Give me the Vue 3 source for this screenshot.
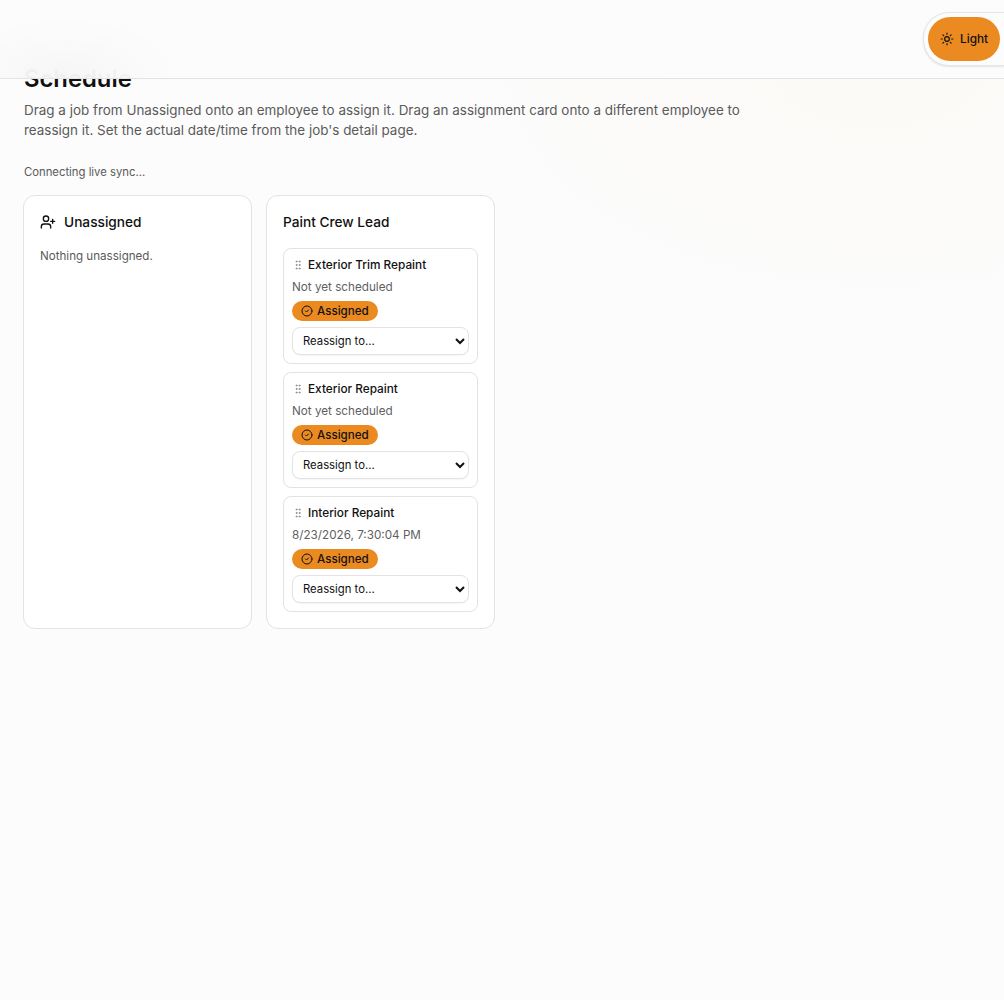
<script setup>
const jobs = [
  { title: 'Exterior Trim Repaint', when: 'Not yet scheduled' },
  { title: 'Exterior Repaint', when: 'Not yet scheduled' },
  { title: 'Interior Repaint', when: '8/23/2026, 7:30:04 PM' },
]
</script>

<template>
  <div class="page">
    <div class="glow-right"></div>
    <header class="topbar">
      <div class="blob"></div>
      <div class="toggle-wrap">
        <button class="toggle">
          <svg class="sun" viewBox="0 0 24 24" fill="none" stroke="currentColor" stroke-width="2" stroke-linecap="round" stroke-linejoin="round">
            <circle cx="12" cy="12" r="4" />
            <path d="M12 2v2M12 20v2M4.93 4.93l1.41 1.41M17.66 17.66l1.41 1.41M2 12h2M20 12h2M6.34 17.66l-1.41 1.41M19.07 4.93l-1.41 1.41" />
          </svg>
          <span>Light</span>
        </button>
      </div>
    </header>

    <main class="main">
      <h1 class="title">Schedule</h1>
      <p class="intro">Drag a job from Unassigned onto an employee to assign it. Drag an assignment card onto a different employee to reassign it. Set the actual date/time from the job's detail page.</p>
      <p class="sync">Connecting live sync…</p>

      <div class="board">
        <section class="column">
          <h2 class="col-title">
            <svg class="user-plus" viewBox="0 0 24 24" fill="none" stroke="currentColor" stroke-width="2" stroke-linecap="round" stroke-linejoin="round">
              <path d="M16 21v-2a4 4 0 0 0-4-4H6a4 4 0 0 0-4 4v2" />
              <circle cx="9" cy="7" r="4" />
              <path d="M19 8v6M22 11h-6" />
            </svg>
            Unassigned
          </h2>
          <p class="empty">Nothing unassigned.</p>
        </section>

        <section class="column">
          <h2 class="col-title">Paint Crew Lead</h2>
          <div class="cards">
            <article v-for="job in jobs" :key="job.title" class="card">
              <div class="card-head">
                <svg class="grip" viewBox="0 0 24 24" fill="none" stroke="currentColor" stroke-width="2" stroke-linecap="round" stroke-linejoin="round">
                  <circle cx="9" cy="5" r="1" /><circle cx="9" cy="12" r="1" /><circle cx="9" cy="19" r="1" />
                  <circle cx="15" cy="5" r="1" /><circle cx="15" cy="12" r="1" /><circle cx="15" cy="19" r="1" />
                </svg>
                <span>{{ job.title }}</span>
              </div>
              <div class="when">{{ job.when }}</div>
              <span class="badge">
                <svg class="check" viewBox="0 0 24 24" fill="none" stroke="currentColor" stroke-width="2" stroke-linecap="round" stroke-linejoin="round">
                  <circle cx="12" cy="12" r="10" />
                  <path d="m9 12 2 2 4-4" />
                </svg>
                Assigned
              </span>
              <select class="reassign">
                <option>Reassign to…</option>
              </select>
            </article>
          </div>
        </section>
      </div>
    </main>
  </div>
</template>

<style>
html, body { margin: 0; background: #fcfcfc; }
</style>

<style scoped>
.page {
  position: relative;
  min-height: 1000px;
  overflow: hidden;
  background: #fcfcfc;
  font-family: Inter, "Liberation Sans", sans-serif;
  color: #111;
}
.glow-right {
  position: absolute;
  left: 480px;
  top: -180px;
  width: 800px;
  height: 480px;
  background: radial-gradient(closest-side, rgba(240, 170, 60, 0.03), rgba(240, 170, 60, 0.012) 70%, rgba(240, 170, 60, 0));
  pointer-events: none;
}
.topbar {
  position: absolute;
  top: 0;
  left: 0;
  right: 0;
  height: 78px;
  border-bottom: 1px solid #e3e3e3;
  background: rgba(252, 252, 252, 0.97);
  display: flex;
  justify-content: flex-end;
  align-items: center;
  overflow: hidden;
  z-index: 2;
}
.blob {
  position: absolute;
  left: -50px;
  top: 15px;
  width: 230px;
  height: 120px;
  border-radius: 50%;
  background: radial-gradient(closest-side, rgba(0, 0, 0, 0.025), rgba(0, 0, 0, 0));
}
.toggle-wrap {
  position: relative;
  padding: 4px;
  border: 1px solid #e6e6e6;
  border-right: 0;
  border-radius: 26px 0 0 26px;
  background: #fcfcfc;
  box-shadow: 0 1px 2px rgba(0, 0, 0, 0.1);
  display: flex;
}
.toggle {
  display: flex;
  align-items: center;
  gap: 6px;
  width: 72px;
  height: 44px;
  padding: 0 0 0 12px;
  border: 0;
  border-radius: 22px;
  background: #ec8a22;
  color: #111;
  font: 500 11.8px Inter, "Liberation Sans", sans-serif;
}
.sun { width: 14px; height: 14px; flex: none; }
.main {
  padding: 65px 24px 0;
  position: relative;
  z-index: 1;
}
.title {
  margin: 0;
  height: 28px;
  font-size: 23.8px;
  line-height: 28px;
  font-weight: 600;
  color: #111;
}
.intro {
  margin: 7px 0 0;
  width: 730px;
  font-size: 13.44px;
  line-height: 20px;
  color: #5a5a5a;
}
.sync {
  margin: 24px 0 0;
  font-size: 11.3px;
  line-height: 16px;
  color: #5a5a5a;
}
.board {
  display: flex;
  align-items: stretch;
  gap: 14px;
  margin: 15px 0 0 -1px;
}
.column {
  box-sizing: border-box;
  width: 229px;
  padding: 16px;
  border: 1px solid #e3e3e3;
  border-radius: 12px;
  background: #fff;
}
.col-title {
  display: flex;
  align-items: center;
  gap: 8px;
  margin: 0;
  height: 20px;
  font-size: 13.7px;
  line-height: 20px;
  font-weight: 500;
}
.user-plus { width: 16px; height: 16px; }
.empty {
  margin: 16px 0 0;
  font-size: 11.6px;
  line-height: 16px;
  color: #5a5a5a;
}
.cards {
  display: flex;
  flex-direction: column;
  gap: 8px;
  margin-top: 16px;
}
.card {
  box-sizing: border-box;
  height: 116px;
  padding: 8px;
  border: 1px solid #e3e3e3;
  border-radius: 8px;
  background: #fff;
  display: flex;
  flex-direction: column;
  align-items: flex-start;
}
.card-head {
  display: flex;
  align-items: center;
  gap: 4px;
  height: 16px;
  font-size: 11.8px;
  line-height: 16px;
  font-weight: 500;
}
.grip { width: 12px; height: 12px; color: #8a8a8a; }
.when {
  margin-top: 6px;
  font-size: 11.7px;
  line-height: 16px;
  color: #5f5f5f;
}
.badge {
  display: inline-flex;
  align-items: center;
  gap: 4px;
  margin-top: 6px;
  height: 20px;
  padding: 0 9px;
  border-radius: 10px;
  background: #ec8a22;
  font-size: 11.6px;
  font-weight: 500;
  color: #111;
}
.check { width: 12px; height: 12px; }
.reassign {
  box-sizing: border-box;
  width: 100%;
  height: 28px;
  margin-top: 6px;
  padding: 0 6px;
  border: 1px solid #e3e3e3;
  border-radius: 8px;
  background: #fff;
  box-shadow: 0 1px 1px rgba(0, 0, 0, 0.04);
  color: #111;
  font: 400 11.3px Inter, "Liberation Sans", sans-serif;
}
</style>
